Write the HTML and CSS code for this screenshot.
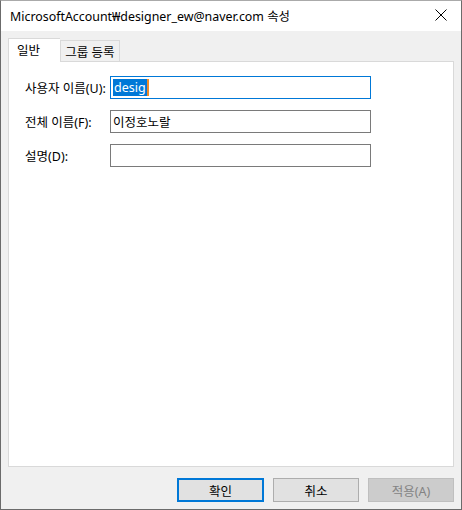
FILE: index.html
```html
<!DOCTYPE html>
<html lang="ko">
<head>
    <meta charset="UTF-8">
    <title>속성</title>
    <link rel="stylesheet" href="styles.css">
</head>
<body>
<div class="window">
    <div class="title-bar">
        <span class="title">MicrosoftAccount₩designer_ew@naver.com 속성</span>
        <span class="close-button">
            <svg width="12" height="12" viewBox="0 0 12 12"><path d="M0.5 0.5 L11.5 11.5 M11.5 0.5 L0.5 11.5" stroke="#000" stroke-width="1" fill="none"/></svg>
        </span>
    </div>

    <div class="dialog-body">
        <div class="tabs">
            <div class="tab active">일반</div>
            <div class="tab">그룹 등록</div>
        </div>

        <div class="tab-panel">
            <div class="form-row">
                <label>사용자 이름(U):</label>
                <div class="text-box focused"><span class="selected">desig</span><span class="ime-caret"></span></div>
            </div>
            <div class="form-row">
                <label>전체 이름(F):</label>
                <div class="text-box">이정호노랄</div>
            </div>
            <div class="form-row">
                <label>설명(D):</label>
                <div class="text-box"></div>
            </div>
        </div>

        <div class="button-bar">
            <button class="btn default">확인</button>
            <button class="btn">취소</button>
            <button class="btn disabled">적용(A)</button>
        </div>
    </div>
</div>
</body>
</html>
```

FILE: styles.css
```css
/* 창 기본 */
body {
    margin: 0;
    font-family: "Noto Sans", "Noto Sans CJK KR", sans-serif;
    font-size: 12.5px;
    color: #000;
}

.window {
    width: 462px;
    height: 510px;
    box-sizing: border-box;
    border: 1px solid #6b6b6b;
    border-top-color: #aaaaaa;
    background-color: #f0f0f0;
    display: flex;
    flex-direction: column;
}

/* 제목 표시줄 */
.title-bar {
    height: 30px;
    background-color: #fff;
    display: flex;
    align-items: center;
    justify-content: space-between;
    padding: 0 14px 0 9px;
}

.title {
    font-size: 12.4px;
}

.close-button {
    display: flex;
    margin-bottom: 2px;
}

/* 본문 */
.dialog-body {
    flex: 1;
    display: flex;
    flex-direction: column;
    padding: 7px 7px 0 7px;
}

.tabs {
    display: flex;
    align-items: flex-end;
    height: 23px;
}

.tab {
    box-sizing: border-box;
    height: 21px;
    padding: 0;
    border: 1px solid #d9d9d9;
    border-bottom: none;
    background-color: #f0f0f0;
    display: flex;
    align-items: center;
    justify-content: center;
    white-space: nowrap;
}

.tab.active {
    width: 52px;
    height: 24px;
    background-color: #fff;
    border-right: none;
    margin-bottom: -1px;
    position: relative;
    justify-content: flex-start;
    padding-left: 8px;
    padding-bottom: 3px;
    z-index: 1;
}

.tab:not(.active) {
    width: 60px;
    border-left: 1px solid #d9d9d9;
}

.tab-panel {
    height: 406px;
    box-sizing: border-box;
    background-color: #fff;
    border: 1px solid #d9d9d9;
    padding: 14px 0 0 16px;
    display: flex;
    flex-direction: column;
    gap: 11px;
}

.form-row {
    display: flex;
    align-items: center;
}

.form-row label {
    width: 85px;
}

.text-box {
    box-sizing: border-box;
    width: 261px;
    height: 23px;
    border: 1px solid #7a7a7a;
    padding: 0 2px;
    display: flex;
    align-items: center;
}

.text-box.focused {
    border-color: #0078d7;
}

.selected {
    background-color: #0078d7;
    color: #fff;
    line-height: 17px;
    padding: 0 1px;
}

.ime-caret {
    width: 2px;
    height: 17px;
    background-color: #f08a24;
}

/* 하단 버튼 */
.button-bar {
    display: flex;
    justify-content: flex-end;
    gap: 9px;
    padding-top: 11px;
}

.btn {
    box-sizing: border-box;
    width: 86px;
    height: 24px;
    border: 1px solid #adadad;
    background-color: #e1e1e1;
    font-family: "Noto Sans", "Noto Sans CJK KR", sans-serif;
    font-size: 12.5px;
    color: #000;
    padding: 0;
}

.btn.default {
    width: 87px;
    border: 2px solid #0078d7;
}

.btn.disabled {
    background-color: #cccccc;
    border-color: #bfbfbf;
    color: #838383;
}
```
